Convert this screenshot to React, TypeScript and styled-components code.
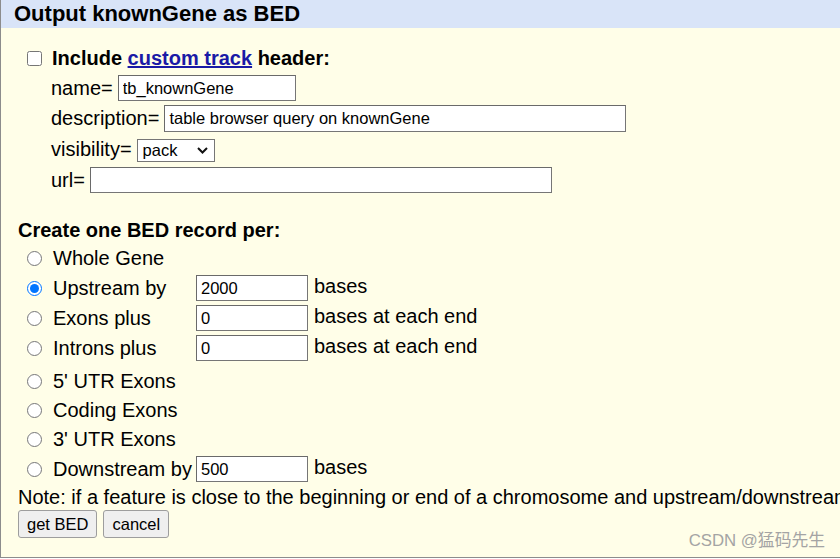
import React from "react";
import styled, { createGlobalStyle } from "styled-components";

const Global = createGlobalStyle`
  html, body { margin: 0; padding: 0; background: #ffffff; }
  body { font-family: "Liberation Sans", Arial, sans-serif; color: #000; }
  * { box-sizing: border-box; }
`;

const Frame = styled.div`
  position: relative;
  width: 840px;
  height: 558px;
  border-left: 1px solid #8c8c8c;
  border-bottom: 1px solid #8c8c8c;
  background: #fffee8;
  overflow: hidden;
`;

const TitleBar = styled.div`
  height: 28px;
  background: #d9e4f8;
  padding-left: 13px;
  font-weight: bold;
  font-size: 22px;
  line-height: 28px;
  white-space: nowrap;
`;

const Content = styled.div`
  display: flex;
  flex-direction: column;
  padding: 16px 0 0 17px;
  font-size: 20px;
  white-space: nowrap;
`;

const Row = styled.div<{ $h: number; $indent?: number; $top?: number }>`
  display: flex;
  align-items: center;
  height: ${(p) => p.$h}px;
  padding-left: ${(p) => p.$indent ?? 0}px;
  margin-top: ${(p) => p.$top ?? 0}px;
  gap: 5px;
`;

const Bold = styled.span`
  font-weight: bold;
`;

const Link = styled.a`
  color: #1a1aa6;
  text-decoration: underline;
`;

const CheckBox = styled.input.attrs({ type: "checkbox" })`
  width: 15px;
  height: 15px;
  margin: 0 5px 0 0;
`;

const Radio = styled.input.attrs({ type: "radio" })`
  width: 15px;
  height: 15px;
  margin: 0 11px 0 0;
  flex: none;
`;

const TextBox = styled.input.attrs({ type: "text" })<{ $w: number; $hgt?: number }>`
  width: ${(p) => p.$w}px;
  height: ${(p) => p.$hgt ?? 26}px;
  border: 1px solid #767676;
  border-top-color: #6a6a6a;
  border-left-color: #6a6a6a;
  background: #fff;
  padding: 0 0 0 4px;
  font-family: "Liberation Sans", Arial, sans-serif;
  font-size: 16.5px;
  color: #000;
  outline: none;
`;

const SelectWrap = styled.div`
  position: relative;
  width: 78px;
  height: 23px;
`;

const Select = styled.select`
  appearance: none;
  -webkit-appearance: none;
  width: 100%;
  height: 100%;
  border: 1px solid #767676;
  border-radius: 0;
  background: #fff;
  padding: 0 0 0 5px;
  font-family: "Liberation Sans", Arial, sans-serif;
  font-size: 16.5px;
  color: #000;
`;

const Chevron = styled.svg`
  position: absolute;
  right: 7px;
  top: 9px;
  pointer-events: none;
`;

const OptionLabel = styled.label<{ $w: number }>`
  display: flex;
  align-items: center;
  width: ${(p) => p.$w}px;
  flex: none;
`;

const Suffix = styled.span`
  margin-left: 1px;
  position: relative;
  top: -2px;
`;

const ButtonRow = styled.div`
  display: flex;
  gap: 6px;
  height: 28px;
`;

const Button = styled.button`
  height: 28px;
  padding: 0 8px;
  background: #efefef;
  border: 1px solid #9d9d9d;
  border-radius: 3px;
  font-family: "Liberation Sans", Arial, sans-serif;
  font-size: 16.5px;
  color: #000;
`;

const Watermark = styled.div`
  position: absolute;
  right: 15px;
  bottom: 6px;
  font-family: "Liberation Sans", "Noto Sans CJK SC", sans-serif;
  font-size: 16.8px;
  line-height: 20px;
  color: #a4a4a4;
  white-space: nowrap;
`;

type Opt = { label: string; h: number; top?: number; value?: string; suffix?: string; checked?: boolean };

const options: Opt[] = [
  { label: "Whole Gene", h: 29 },
  { label: "Upstream by", h: 30, value: "2000", suffix: "bases", checked: true },
  { label: "Exons plus", h: 30, value: "0", suffix: "bases at each end" },
  { label: "Introns plus", h: 30, value: "0", suffix: "bases at each end" },
  { label: "5' UTR Exons", h: 30, top: 3 },
  { label: "Coding Exons", h: 28 },
  { label: "3' UTR Exons", h: 30 },
  { label: "Downstream by", h: 30, value: "500", suffix: "bases" },
];

export default function App() {
  return (
    <>
      <Global />
      <Frame>
        <TitleBar>Output knownGene as BED</TitleBar>
        <Content>
          <Row $h={29} $indent={9}>
            <CheckBox />
            <Bold>
              Include <Link href="#">custom track</Link> header:
            </Bold>
          </Row>
          <Row $h={30} $indent={33}>
            name=
            <TextBox $w={178} defaultValue="tb_knownGene" />
          </Row>
          <Row $h={31} $indent={33}>
            description=
            <TextBox $w={462} $hgt={27} defaultValue="table browser query on knownGene" />
          </Row>
          <Row $h={31} $indent={33}>
            visibility=
            <SelectWrap>
              <Select defaultValue="pack">
                <option value="hide">hide</option>
                <option value="dense">dense</option>
                <option value="squish">squish</option>
                <option value="pack">pack</option>
                <option value="full">full</option>
              </Select>
              <Chevron width="11" height="7" viewBox="0 0 11 7">
                <path d="M1 1 L5.5 5.5 L10 1" fill="none" stroke="#111" strokeWidth="2" />
              </Chevron>
            </SelectWrap>
          </Row>
          <Row $h={30} $indent={33}>
            url=
            <TextBox $w={462} />
          </Row>

          <Row $h={28} $top={21}>
            <Bold>Create one BED record per:</Bold>
          </Row>
          {options.map((o) => (
            <Row key={o.label} $h={o.h} $top={o.top} $indent={9}>
              <OptionLabel $w={164}>
                <Radio name="rec" defaultChecked={o.checked} />
                {o.label}
              </OptionLabel>
              {o.value !== undefined && (
                <>
                  <TextBox $w={112} defaultValue={o.value} />
                  <Suffix>{o.suffix}</Suffix>
                </>
              )}
            </Row>
          ))}
          <Row $h={26}>
            Note: if a feature is close to the beginning or end of a chromosome and upstream/downstream
            bases are added, they may be truncated in order to avoid extending past the edge of the chromosome.
          </Row>
          <ButtonRow>
            <Button>get BED</Button>
            <Button>cancel</Button>
          </ButtonRow>
        </Content>
        <Watermark>CSDN @猛码先生</Watermark>
      </Frame>
    </>
  );
}
